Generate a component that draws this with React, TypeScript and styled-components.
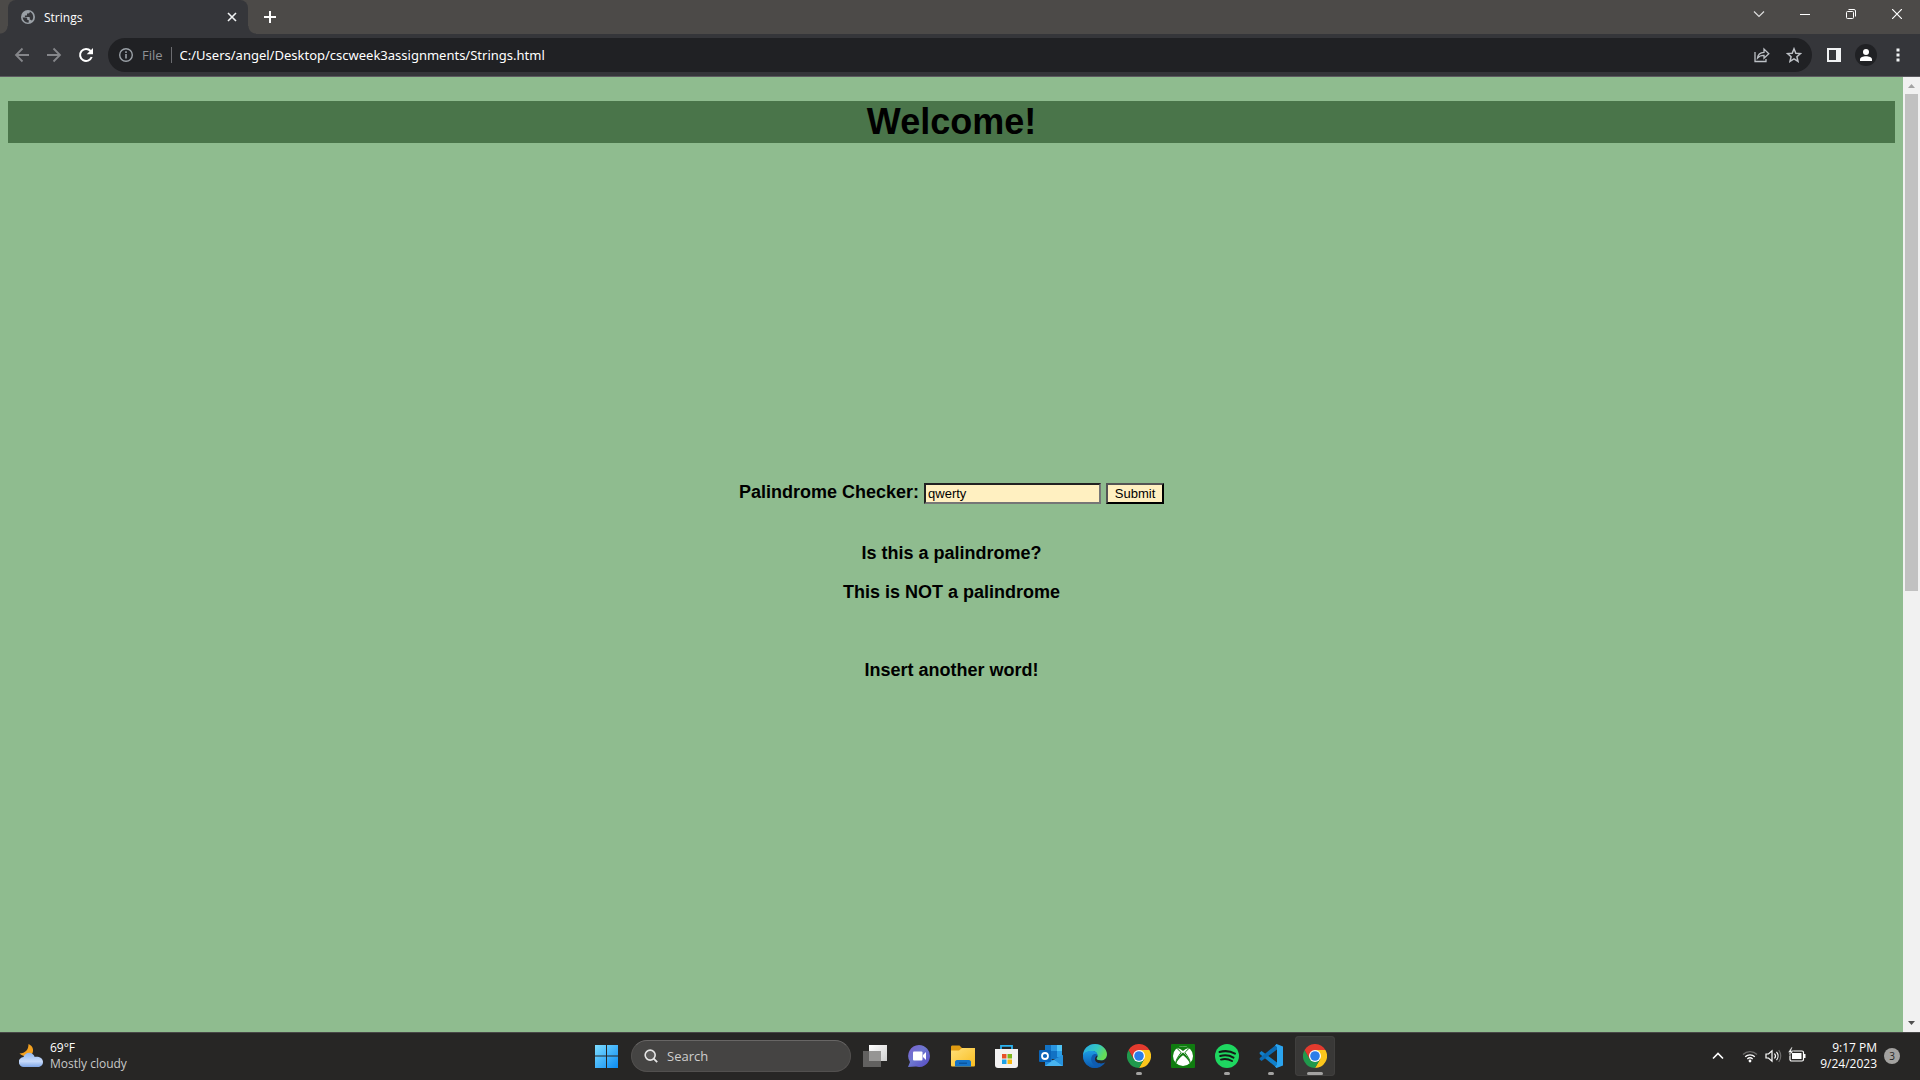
import React, { useState } from "react";
import styled, { createGlobalStyle } from "styled-components";

const ui = `"Open Sans", "Noto Sans", sans-serif`;
const doc = `"Liberation Sans", Arial, sans-serif`;

const Global = createGlobalStyle`
  * { box-sizing: border-box; }
  body { margin: 0; background: #8fbc8f; }
  button { font: inherit; color: inherit; border: 0; padding: 0; background: none; }
`;

const Desktop = styled.div`
  display: flex;
  flex-direction: column;
  height: 100vh;
  overflow: hidden;
  font-family: ${ui};
`;

const TabStrip = styled.header`
  display: flex;
  align-items: flex-end;
  justify-content: space-between;
  height: 34px;
  background: #4c4a48;
`;
const Tabs = styled.div`
  display: flex;
  align-items: flex-end;
  height: 34px;
`;
const TabFoot = styled.span<{ $side: "left" | "right" }>`
  width: 8px;
  height: 8px;
  background: radial-gradient(circle at ${(p) => (p.$side === "left" ? "0 0" : "100% 0")}, transparent 7px, #35363a 8px);
`;
const Tab = styled.div`
  display: flex;
  align-items: center;
  width: 240px;
  height: 34px;
  padding: 0 8px 0 12px;
  gap: 8px;
  border-radius: 8px 8px 0 0;
  background: #35363a;
  color: #fff;
  font-size: 12px;
`;
const TabTitle = styled.span`
  flex: 1;
`;
const IconButton = styled.button<{ $w: number; $h?: number }>`
  display: flex;
  align-items: center;
  justify-content: center;
  flex: none;
  width: ${(p) => p.$w}px;
  height: ${(p) => p.$h ?? 32}px;
`;
const WindowButtons = styled.div`
  display: flex;
  align-self: flex-start;
`;

const Toolbar = styled.nav`
  display: flex;
  align-items: center;
  height: 43px;
  padding: 0 6px;
  background: #35363a;
  border-bottom: 1px solid #5c5a60;
`;
const AddressBar = styled.div`
  display: flex;
  flex: 1;
  align-items: center;
  height: 34px;
  margin: 0 6px;
  padding: 0 2px 0 10px;
  border-radius: 17px;
  background: #202124;
`;
const Scheme = styled.span`
  padding: 0 8px;
  margin-right: 8px;
  line-height: 16px;
  border-right: 1px solid #6b6c70;
  color: #8f9296;
  font-size: 13px;
`;
const Url = styled.input`
  flex: 1;
  padding: 0;
  border: 0;
  outline: 0;
  background: none;
  color: #fff;
  font: 13px "Noto Sans", sans-serif;
`;
const Avatar = styled.span`
  display: flex;
  width: 22px;
  height: 22px;
  border-radius: 50%;
  background: #202124;
`;

const Viewport = styled.div`
  display: flex;
  flex: 1;
  min-height: 0;
  background: #8fbc8f;
`;
const Page = styled.main`
  flex: 1;
  overflow: hidden;
  padding: 24px 8px;
  color: #000;
  font: bold 18px/21px ${doc};
  text-align: center;
`;
const Welcome = styled.h1`
  margin: 0 0 339px;
  background: #4a754a;
  font-size: 36px;
  line-height: 42px;
`;
const Checker = styled.form`
  display: flex;
  align-items: baseline;
  justify-content: center;
  gap: 5px;
  margin-bottom: 39px;
`;
const Word = styled.input`
  width: 177px;
  height: 21px;
  padding: 1px 2px;
  border: 2px inset #767676;
  border-radius: 0;
  background: #fff0c1;
  color: #000;
  font: 13px ${doc};
`;
const Submit = styled.button`
  width: 58px;
  height: 21px;
  border: 2px outset #000;
  background: #fff0c1;
  color: #000;
  font: 13px ${doc};
`;
const Line = styled.p`
  min-height: 21px;
  margin: 0 0 18px;
`;

const ScrollTrack = styled.div`
  display: grid;
  grid-template-rows: 17px 52% 1fr 17px;
  justify-items: center;
  width: 17px;
  background: #f1f1f1;
`;
const ScrollThumb = styled.div`
  width: 13px;
  background: #c1c1c1;
`;

const Taskbar = styled.footer`
  display: grid;
  grid-template-columns: 1fr auto 1fr;
  align-items: center;
  height: 48px;
  padding: 0 14px 1px 16px;
  background: #272625;
  border-top: 1px solid #484747;
  color: #fff;
  font-size: 12px;
  line-height: 16px;
`;
const Weather = styled.button`
  display: flex;
  align-items: center;
  justify-self: start;
  gap: 7px;
  padding-left: 3px;
  text-align: left;
`;
const Muted = styled.span`
  display: block;
  color: #c8c8c8;
`;
const Apps = styled.div`
  display: flex;
  align-items: center;
  gap: 4px;
`;
const AppButton = styled.button<{ $run?: "idle" | "active" }>`
  display: grid;
  place-items: center;
  position: relative;
  width: 40px;
  height: 40px;
  border-radius: 4px;
  background: ${(p) => (p.$run === "active" ? "#393837" : "none")};
  box-shadow: ${(p) => (p.$run === "active" ? "inset 0 0 0 1px #403f3e" : "none")};
  &::after {
    content: "";
    display: ${(p) => (p.$run ? "block" : "none")};
    position: absolute;
    bottom: 1px;
    width: ${(p) => (p.$run === "active" ? 16 : 6)}px;
    height: 3px;
    border-radius: 2px;
    background: #a3a2a1;
  }
`;
const SearchBox = styled.label`
  display: flex;
  align-items: center;
  width: 220px;
  height: 32px;
  padding: 0 12px;
  gap: 9px;
  border: 1px solid #52504f;
  border-top-color: #686665;
  border-radius: 16px;
  background: #454443;
`;
const SearchInput = styled.input`
  width: 100%;
  padding: 0;
  border: 0;
  outline: 0;
  background: none;
  color: #fff;
  font: 13px ${ui};
  &::placeholder { color: #cfcecd; opacity: 1; }
`;
const Tray = styled.div`
  display: flex;
  align-items: center;
  justify-self: end;
`;
const TrayGroup = styled.button`
  display: flex;
  align-items: center;
  gap: 6px;
  margin: 0 14px 0 12px;
`;
const Clock = styled.time`
  text-align: right;
`;
const Count = styled.button`
  width: 16px;
  height: 16px;
  margin: 0 6px 0 7px;
  border-radius: 50%;
  background: #a3a2a0;
  color: #222;
  font-size: 10px;
  line-height: 16px;
`;

const Svg = ({ s = 24, v = "0 0 24 24", children }: { s?: number; v?: string; children: React.ReactNode }) => (
  <svg width={s} height={s} viewBox={v} fill="none" aria-hidden="true">{children}</svg>
);

const GlobeIcon = () => (
  <Svg s={16} v="0 0 16 16">
    <circle cx="8" cy="8" r="7" fill="#9aa0a6" />
    <path d="M2.600 8.600h3.200c.9 0 1.500.6 1.500 1.500v.9H8.700v2.600c-3.200.3-5.600-1.800-6.100-5zM9.800 2.500v.6c0 .8-.6 1.400-1.400 1.400H7v1.400c0 .4-.3.700-.7.700H4.900V8h4.200c.4 0 .7.300.7.700v2.100h.7c.6 0 1.100.4 1.300 1 2.300-2.300 2-7-2-9.300z" fill="#35363a" />
  </Svg>
);
const CloseIcon = () => <Svg s={16} v="0 0 16 16"><path d="m4 4 8 8m0-8-8 8" stroke="#f1f3f4" strokeWidth="1.600" /></Svg>;
const PlusIcon = () => <Svg s={16} v="0 0 16 16"><path d="M8 2v12M2 8h12" stroke="#fff" strokeWidth="2" /></Svg>;
const BackIcon = () => <Svg s={16} v="0 0 16 16"><path d="M15 8H2m6.500-6.500L2 8l6.500 6.500" stroke="#85868a" strokeWidth="1.800" /></Svg>;
const ForwardIcon = () => <Svg s={16} v="0 0 16 16"><path d="M1 8h13M7.500 1.500 14 8l-6.500 6.500" stroke="#85868a" strokeWidth="1.800" /></Svg>;
const ReloadIcon = () => (
  <Svg s={16} v="0 0 16 16">
    <path d="M13.700 10A6 6 0 1 1 12.600 4" stroke="#fff" strokeWidth="2" />
    <path d="M15 1v6.300H8.700z" fill="#fff" />
  </Svg>
);
const InfoIcon = () => (
  <Svg s={16} v="0 0 16 16">
    <circle cx="8" cy="8" r="6.300" stroke="#9aa0a6" strokeWidth="1.400" />
    <path d="M8 7v4.500M8 4.300v1.600" stroke="#9aa0a6" strokeWidth="1.600" />
  </Svg>
);
const ShareIcon = () => (
  <Svg s={16} v="0 0 16 16">
    <path d="M1 5v9.500h11V12M3.500 11c.3-3.500 2.500-5.500 6.500-5.700V2l4.800 4.700L10 11.200V8.300c-3 0-5 .8-6.500 2.700z" stroke="#bdc1c6" strokeWidth="1.300" />
  </Svg>
);
const StarIcon = () => (
  <Svg s={16} v="0 0 16 16">
    <path d="m8 1.800 1.800 4.400 4.700.4-3.600 3.100 1.100 4.600L8 11.800l-4 2.500 1.100-4.600L1.500 6.600l4.700-.4z" stroke="#bdc1c6" strokeWidth="1.500" />
  </Svg>
);
const PanelIcon = () => <Svg s={14} v="0 0 14 14"><path fillRule="evenodd" d="M0 0h14v14H0zM2 2v10h7V2z" fill="#f1f3f4" /></Svg>;
const PersonIcon = () => <Svg s={22} v="0 0 22 22"><circle cx="11" cy="8" r="3" fill="#fff" /><path d="M5 17v-1.500c0-2 3-3.200 6-3.200s6 1.200 6 3.200V17z" fill="#fff" /></Svg>;
const DotsIcon = () => <Svg s={16} v="0 0 16 16"><path d="M6.500 1.500h3v3h-3zM6.500 6.500h3v3h-3zM6.500 11.500h3v3h-3z" fill="#f1f3f4" /></Svg>;

const ArrowMark = ({ d, fill }: { d: string; fill: string }) => (
  <Svg s={17} v="0 0 17 17"><path d={d} fill={fill} /></Svg>
);

const WeatherIcon = () => (
  <Svg v="0 0 24 24">
    <defs>
      <linearGradient id="cloud" x1="0" y1="0" x2="0" y2="1"><stop stopColor="#8fb5ee" /><stop offset=".6" stopColor="#c8dbfb" /><stop offset="1" stopColor="#7fa6e6" /></linearGradient>
    </defs>
    <path d="M9.500 0c5 2 5.500 7 3.500 10s-7 4-12.500-.5C6.500 9 9.500 6 9.500 0z" fill="#f4a11f" />
    <path d="M5 23a5 5 0 0 1-.5-10c1-3 4-4.800 7-4 2 .5 3.500 2 4.200 4 4-.8 8.300 1.200 8.300 5 0 3.200-2.500 5-5.300 5z" fill="url(#cloud)" />
  </Svg>
);
const WindowsIcon = () => (
  <Svg>
    <defs><linearGradient id="win" x1="0" y1="0" x2="1" y2="1"><stop stopColor="#7ddcff" /><stop offset="1" stopColor="#0a8cf5" /></linearGradient></defs>
    <path d="M0 1h11v10.500H0zM12 1h11v10.500H12zM0 12.500h11V24H0zM12 12.500h11V24H12z" fill="url(#win)" />
  </Svg>
);
const SearchIcon = () => <Svg s={16} v="0 0 16 16"><circle cx="7" cy="7" r="5.700" stroke="#e6e6e6" strokeWidth="1.800" fill="#5c5b5a" /><path d="m11 11 4 4" stroke="#e6e6e6" strokeWidth="2" /></Svg>;
const TaskViewIcon = () => (
  <Svg>
    <defs><linearGradient id="tv" x1="0" y1="0" x2="1" y2="1"><stop stopColor="#fff" /><stop offset="1" stopColor="#cfcfcf" /></linearGradient></defs>
    <path d="M6 1h18v16H6z" fill="url(#tv)" /><path d="M0 7h18v16H0z" fill="#626160" /><path d="M6 7h12v10H6z" fill="#969594" />
  </Svg>
);
const ChatIcon = () => (
  <Svg>
    <defs><linearGradient id="chat" x1="0" y1="0" x2="1" y2="1"><stop stopColor="#7a5fd0" /><stop offset=".45" stopColor="#6e78cf" /><stop offset="1" stopColor="#5547c4" /></linearGradient></defs>
    <path d="M12 1a11 11 0 1 1-3 21.600L1 23l2-5A11 11 0 0 1 12 1z" fill="url(#chat)" />
    <rect x="6" y="7.500" width="9.500" height="9" rx="1" fill="#fff" /><path d="m16 11 3-3v8l-3-3z" fill="#fff" />
  </Svg>
);
const FolderIcon = () => (
  <Svg>
    <defs><linearGradient id="fold" x1="0" y1="0" x2="1" y2="1"><stop stopColor="#ffe07a" /><stop offset="1" stopColor="#f9bd20" /></linearGradient></defs>
    <path d="M0 3c0-1 .5-1.500 1.500-1.500h7L11 4h12v5H0z" fill="#e09b12" />
    <path d="M0 6.500h8L11 4h13v17c0 1-.5 1.500-1.500 1.500h-21C.5 22.500 0 22 0 21z" fill="url(#fold)" />
    <path d="M4 22.500V18c0-1 .8-2 2-2h12c1.200 0 2 1 2 2v4.500z" fill="#1473c8" /><path d="M8 18.500h8v1.500H8z" fill="#0a56a0" />
  </Svg>
);
const StoreIcon = () => (
  <Svg>
    <path d="M6 6V1.800h11V6" stroke="#2bb3f0" strokeWidth="1.800" />
    <path d="M0 5h23v16c0 2-1 3-3 3H3c-2 0-3-1-3-3z" fill="#f3f2f2" />
    <path d="M7 10h4.500v4.500H7z" fill="#e8502a" /><path d="M12.500 10H17v4.500h-4.500z" fill="#7eb61c" /><path d="M7 15.500h4.500V20H7z" fill="#1fa3e8" /><path d="M12.500 15.500H17V20h-4.500z" fill="#fab710" />
  </Svg>
);
const OutlookIcon = () => (
  <Svg>
    <path d="M6 1h17v14H6z" fill="#1272c4" /><path d="M12 1h6v6h-6z" fill="#2a95e0" /><path d="M18 1h5v6h-5z" fill="#4fc3f5" /><path d="M18 7h5v6h-5z" fill="#2b9ee8" />
    <path d="M6 11l9 6 9-6v11H6z" fill="#1e88dc" /><path d="m6 22 9-6.500L24 22z" fill="#48b4f0" /><path d="M24 11v11l-9-6.500z" fill="#2792dd" />
    <rect y="6" width="12" height="12" rx="1" fill="#0a64b8" /><circle cx="6" cy="12" r="3" stroke="#fff" strokeWidth="1.800" />
  </Svg>
);
const EdgeIcon = () => (
  <Svg>
    <defs>
      <linearGradient id="e1" x1="0" y1="0" x2="1" y2=".4"><stop stopColor="#27a9e8" /><stop offset=".6" stopColor="#35c8c0" /><stop offset="1" stopColor="#66dc55" /></linearGradient>
      <linearGradient id="e2" x1="0" y1="0" x2="0" y2="1"><stop stopColor="#1c9be4" /><stop offset="1" stopColor="#0b57ad" /></linearGradient>
    </defs>
    <circle cx="12" cy="12" r="12" fill="#0f5bb0" />
    <path d="M0 12C0 4.800 5.500 0 12 0s12 5 12 10.500c0 4-3 6-6 6-2.800 0-4.500-1-4.500-2 0-.8 1-1 1-3C14.500 9 12.500 7 9 7c-5 0-8 2.500-9 5z" fill="url(#e1)" />
    <path d="M0 12c.5-3.500 4-5 8.500-5 3.500 0 6 2 6 4.500-1-2-4-2-5.500.5-2.500 4 .5 10 6.500 11.500C7 25.500 0 19.500 0 12z" fill="url(#e2)" />
    <path d="M14.500 11.500c0 2-1 2.200-1 3 0 1 1.700 2 4.500 2 3 0 6-2 6-6 1 3.500 0 6-1.300 7.800-4 2.200-10.700 1.200-10.700-3.300 0-1.500.9-3 2.500-3.500z" fill="#272625" />
  </Svg>
);
const ChromeIcon = () => (
  <Svg>
    <path d="M12 6h10.400A12 12 0 0 1 12 24l5.200-9z" fill="#fcc61c" />
    <path d="M1.600 6 6.800 15 12 18l5.200-3L12 24A12 12 0 0 1 1.600 6z" fill="#20994c" />
    <path d="M1.600 6A12 12 0 0 1 22.400 6H12L6.800 15z" fill="#e33b2e" />
    <circle cx="12" cy="12" r="6" fill="#fff" /><circle cx="12" cy="12" r="4.800" fill="#2b7de9" />
  </Svg>
);
const XboxIcon = () => (
  <Svg>
    <rect width="24" height="24" rx="1" fill="#107c10" /><circle cx="12" cy="12" r="10" fill="#fff" />
    <path d="M5 4.500c2-.8 5 .8 7 2.500 2-1.700 5-3.300 7-2.500-2.200-2.700-11-3.500-14 0zM5 19.500C4.500 16 8.500 11 12 8.500c3.500 2.500 7.500 7.500 7 11-1.500-3.500-4.500-6.500-7-8.200-2.500 1.700-5.500 4.700-7 8.200z" fill="#107c10" />
    <path d="M5.500 4.300C7 5 9 7 10 8.700 7.500 12 5 15.500 4.800 19" stroke="#107c10" /><path d="M18.500 4.300C17 5 15 7 14 8.700c2.500 3.300 5 6.800 5.200 10.300" stroke="#107c10" />
  </Svg>
);
const SpotifyIcon = () => (
  <Svg><circle cx="12" cy="12" r="12" fill="#1ed760" /><path d="M4.500 8c5-1.400 11-.9 15.500 1.600M5.200 12c4.500-1.200 9.300-.7 13.300 1.600M6 15.600c3.700-1 7.500-.6 11 1.400" stroke="#151a16" strokeWidth="2" strokeLinecap="round" /></Svg>
);
const CodeIcon = () => (
  <Svg>
    <path d="M.5 8.800 2.500 7 18 18.500V24L.8 10z" fill="#1180ca" /><path d="M.5 15.200 2.500 17 18 5.500V0L.8 14z" fill="#0b6cb5" />
    <path d="M17.500 0 24 2.500v19L17.500 24 16 22.500l2-1.500V3l-2-1.500z" fill="#2ba4ef" />
  </Svg>
);
const ChevronUp = () => <Svg s={16} v="0 0 16 16"><path d="m3 10.500 5-5 5 5" stroke="#fff" strokeWidth="1.600" /></Svg>;
const WifiIcon = () => (
  <Svg s={16} v="0 0 16 16">
    <path d="M1 6.500a10 10 0 0 1 14 0" stroke="#6d6c6b" strokeWidth="1.300" /><path d="M3.200 8.800a7 7 0 0 1 9.600 0M5.300 11a4 4 0 0 1 5.400 0" stroke="#fff" strokeWidth="1.300" /><circle cx="8" cy="13" r="1.400" fill="#fff" />
  </Svg>
);
const VolumeIcon = () => (
  <Svg s={18} v="0 0 18 18">
    <path d="M2 7h2.500L8 3.800v10.400L4.500 11H2z" stroke="#fff" strokeWidth="1.200" /><path d="M10.500 6.500c1.200 1.500 1.200 3.500 0 5M12.500 4.800c2 2.400 2 6 0 8.400" stroke="#fff" strokeWidth="1.200" /><path d="M14.700 3.200c2.700 3.400 2.700 8.200 0 11.600" stroke="#6d6c6b" strokeWidth="1.200" />
  </Svg>
);
const BatteryIcon = () => (
  <Svg s={18} v="0 0 18 18">
    <rect x="2" y="4" width="13.500" height="10" rx="1.500" stroke="#fff" strokeWidth="1.200" /><path d="M4 6h9.500v6H4zM16 7h1.500v4H16z" fill="#fff" /><path d="M3.500 0 0 5.500h2.500L1.500 9l4-5H3.200l1.300-4z" fill="#fff" stroke="#272625" strokeWidth=".5" />
  </Svg>
);

export default function App() {
  const [word, setWord] = useState("qwerty");
  const [checked, setChecked] = useState("qwerty");
  const isPalindrome = checked === checked.split("").reverse().join("");

  return (
    <Desktop>
      <Global />
      <TabStrip>
        <Tabs>
          <TabFoot $side="left" />
          <Tab>
            <GlobeIcon />
            <TabTitle>Strings</TabTitle>
            <IconButton $w={16} $h={16} aria-label="Close tab"><CloseIcon /></IconButton>
          </Tab>
          <TabFoot $side="right" />
          <IconButton $w={28} $h={34} aria-label="New tab"><PlusIcon /></IconButton>
        </Tabs>
        <WindowButtons>
          <IconButton $w={46} $h={28} aria-label="Search tabs"><Svg s={12} v="0 0 12 12"><path d="m1 3.500 5 5 5-5" stroke="#ddd" strokeWidth="1.200" /></Svg></IconButton>
          <IconButton $w={46} $h={28} aria-label="Minimize"><Svg s={10} v="0 0 10 10"><path d="M0 5.500h10" stroke="#fff" /></Svg></IconButton>
          <IconButton $w={46} $h={28} aria-label="Restore"><Svg s={10} v="0 0 10 10"><rect x=".5" y="2.500" width="7" height="7" rx="1" stroke="#fff" /><path d="M2.500.500H8A1.500 1.500 0 0 1 9.500 2v5.500" stroke="#fff" /></Svg></IconButton>
          <IconButton $w={46} $h={28} aria-label="Close"><Svg s={10} v="0 0 10 10"><path d="m0 0 10 10M10 0 0 10" stroke="#fff" strokeWidth="1.200" /></Svg></IconButton>
        </WindowButtons>
      </TabStrip>
      <Toolbar>
        <IconButton $w={32} aria-label="Back"><BackIcon /></IconButton>
        <IconButton $w={32} aria-label="Forward"><ForwardIcon /></IconButton>
        <IconButton $w={32} aria-label="Reload"><ReloadIcon /></IconButton>
        <AddressBar>
          <InfoIcon />
          <Scheme>File</Scheme>
          <Url aria-label="Address" defaultValue="C:/Users/angel/Desktop/cscweek3assignments/Strings.html" />
          <IconButton $w={32} aria-label="Share"><ShareIcon /></IconButton>
          <IconButton $w={32} aria-label="Bookmark"><StarIcon /></IconButton>
        </AddressBar>
        <IconButton $w={32} aria-label="Side panel"><PanelIcon /></IconButton>
        <IconButton $w={32} aria-label="Profile"><Avatar><PersonIcon /></Avatar></IconButton>
        <IconButton $w={32} aria-label="Menu"><DotsIcon /></IconButton>
      </Toolbar>
      <Viewport>
        <Page>
          <Welcome>Welcome!</Welcome>
          <Checker onSubmit={(e) => { e.preventDefault(); setChecked(word); }}>
            <label htmlFor="word">Palindrome Checker:</label>
            <Word id="word" value={word} onChange={(e) => setWord(e.target.value)} />
            <Submit type="submit">Submit</Submit>
          </Checker>
          <Line>Is this a palindrome?</Line>
          <Line>{isPalindrome ? "This is a palindrome" : "This is NOT a palindrome"}</Line>
          <Line />
          <Line>Insert another word!</Line>
        </Page>
        <ScrollTrack>
          <ArrowMark d="M5 11h7L8.500 7z" fill="#a3a3a3" />
          <ScrollThumb />
          <span />
          <ArrowMark d="M5 6h7l-3.500 4z" fill="#505050" />
        </ScrollTrack>
      </Viewport>
      <Taskbar>
        <Weather>
          <WeatherIcon />
          <span>69°F<Muted>Mostly cloudy</Muted></span>
        </Weather>
        <Apps>
          <AppButton aria-label="Start"><WindowsIcon /></AppButton>
          <SearchBox><SearchIcon /><SearchInput aria-label="Search" placeholder="Search" /></SearchBox>
          <AppButton aria-label="Task view"><TaskViewIcon /></AppButton>
          <AppButton aria-label="Chat"><ChatIcon /></AppButton>
          <AppButton aria-label="File Explorer"><FolderIcon /></AppButton>
          <AppButton aria-label="Microsoft Store"><StoreIcon /></AppButton>
          <AppButton aria-label="Outlook"><OutlookIcon /></AppButton>
          <AppButton aria-label="Edge"><EdgeIcon /></AppButton>
          <AppButton aria-label="Chrome" $run="idle"><ChromeIcon /></AppButton>
          <AppButton aria-label="Xbox"><XboxIcon /></AppButton>
          <AppButton aria-label="Spotify" $run="idle"><SpotifyIcon /></AppButton>
          <AppButton aria-label="Visual Studio Code" $run="idle"><CodeIcon /></AppButton>
          <AppButton aria-label="Chrome window" $run="active"><ChromeIcon /></AppButton>
        </Apps>
        <Tray>
          <IconButton $w={24} aria-label="Hidden icons"><ChevronUp /></IconButton>
          <TrayGroup aria-label="Network, volume and battery"><WifiIcon /><VolumeIcon /><BatteryIcon /></TrayGroup>
          <Clock>9:17 PM<br />9/24/2023</Clock>
          <Count aria-label="Notifications">3</Count>
        </Tray>
      </Taskbar>
    </Desktop>
  );
}
